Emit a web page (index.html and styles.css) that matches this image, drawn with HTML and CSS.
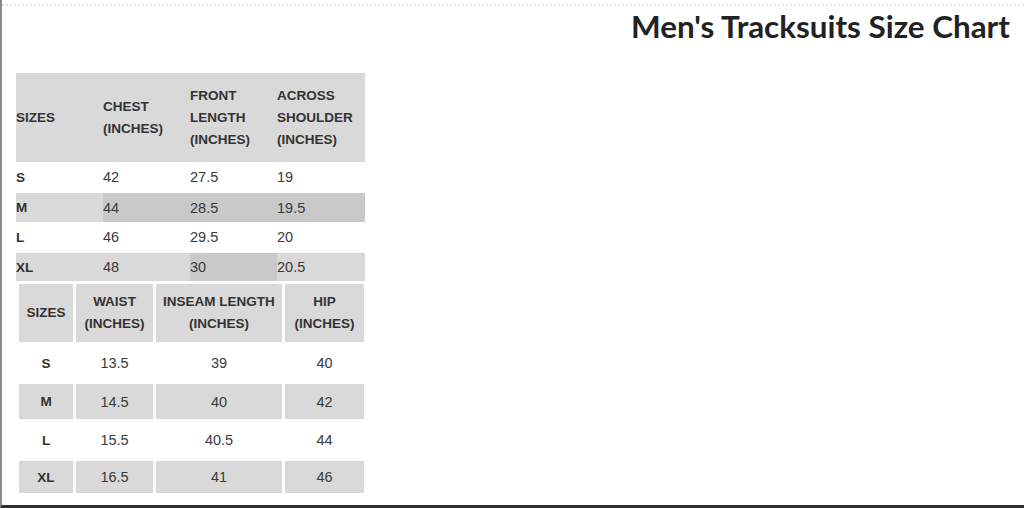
FILE: index.html
```html
<!DOCTYPE html>
<html lang="en">
<head>
<meta charset="utf-8">
<title>Men's Tracksuits Size Chart</title>
<link rel="stylesheet" href="styles.css">
</head>
<body>
<div class="frame">
  <div class="topline"></div>
  <h1 class="title">Men's Tracksuits Size Chart</h1>
  <div class="charts">
    <table class="chart-top">
      <colgroup><col class="c1"><col class="c2"><col class="c3"><col class="c4"></colgroup>
      <thead>
        <tr class="head">
          <th>SIZES</th>
          <th>CHEST<br>(INCHES)</th>
          <th>FRONT<br>LENGTH<br>(INCHES)</th>
          <th>ACROSS<br>SHOULDER<br>(INCHES)</th>
        </tr>
      </thead>
      <tbody>
        <tr><th>S</th><td>42</td><td>27.5</td><td>19</td></tr>
        <tr class="grey"><th>M</th><td class="dark">44</td><td class="dark">28.5</td><td class="dark">19.5</td></tr>
        <tr><th>L</th><td>46</td><td>29.5</td><td>20</td></tr>
        <tr class="grey last"><th>XL</th><td>48</td><td class="dark">30</td><td>20.5</td></tr>
      </tbody>
    </table>
    <table class="chart-bottom">
      <colgroup><col class="d1"><col class="d2"><col class="d3"><col class="d4"></colgroup>
      <thead>
        <tr class="head">
          <th>SIZES</th>
          <th>WAIST<br>(INCHES)</th>
          <th>INSEAM LENGTH<br>(INCHES)</th>
          <th>HIP<br>(INCHES)</th>
        </tr>
      </thead>
      <tbody>
        <tr class="r1"><th>S</th><td>13.5</td><td>39</td><td>40</td></tr>
        <tr class="grey r2"><th>M</th><td>14.5</td><td>40</td><td>42</td></tr>
        <tr class="r3"><th>L</th><td>15.5</td><td>40.5</td><td>44</td></tr>
        <tr class="grey r4"><th>XL</th><td>16.5</td><td>41</td><td>46</td></tr>
      </tbody>
    </table>
  </div>
</div>
</body>
</html>
```
FILE: styles.css
```css
html, body {
  margin: 0;
  padding: 0;
  background: #ffffff;
}
body {
  width: 1024px;
  height: 508px;
  overflow: hidden;
}
.frame {
  box-sizing: border-box;
  height: 508px;
  border-left: 2px solid #8a8a8a;
  border-bottom: 3px solid #2f2f2f;
  display: flex;
  flex-direction: column;
}
.topline {
  margin-top: 4px;
  height: 0;
  border-top: 2px dotted #e2e2e2;
}
.title {
  margin: 1px 14px 0 0;
  text-align: right;
  font-family: "Lato", "Liberation Sans", sans-serif;
  font-weight: 700;
  font-size: 31.4px;
  line-height: 38px;
  color: #222222;
  letter-spacing: 0;
}
.charts {
  margin-top: 28px;
  padding-left: 14px;
  display: flex;
  flex-direction: column;
  align-items: flex-start;
}
table {
  font-family: "Liberation Sans", Arial, sans-serif;
  font-size: 13.5px;
  color: #333333;
  table-layout: fixed;
}
th {
  font-weight: 700;
}
td {
  font-weight: 400;
  font-size: 14.5px;
  color: #3a3a3a;
}
.chart-top {
  border-collapse: collapse;
  border-spacing: 0;
  width: 349px;
}
.chart-top .c1, .chart-top .c2, .chart-top .c3 { width: 87px; }
.chart-top .c4 { width: 88px; }
.chart-top th, .chart-top td {
  padding: 0;
  text-align: left;
  vertical-align: middle;
  height: 30px;
}
.chart-top .head th {
  height: 89px;
  line-height: 22px;
  background: #d9d9d9;
}
.chart-top tr.grey th, .chart-top tr.grey td {
  background: #d9d9d9;
  border-top: 1px solid #ffffff;
  height: 29px;
}
.chart-top tr.grey td.dark {
  background: #c9c9c9;
}
.chart-top tr.last th, .chart-top tr.last td {
  height: 28px;
}
.chart-bottom {
  border-collapse: separate;
  border-spacing: 3px;
  width: 351px;
}
.chart-bottom .d1 { width: 54px; }
.chart-bottom .d2 { width: 77px; }
.chart-bottom .d3 { width: 126px; }
.chart-bottom .d4 { width: 79px; }
.chart-bottom th, .chart-bottom td {
  padding: 0;
  text-align: center;
  vertical-align: middle;
  height: 35px;
}
.chart-bottom .head th {
  height: 58px;
  line-height: 22px;
  background: #d9d9d9;
}
.chart-bottom tr.grey th, .chart-bottom tr.grey td {
  background: #d9d9d9;
}
.chart-bottom tr.r1 th, .chart-bottom tr.r1 td,
.chart-bottom tr.r3 th, .chart-bottom tr.r3 td {
  height: 36px;
}
.chart-bottom tr.r4 th, .chart-bottom tr.r4 td {
  height: 32px;
}
```
